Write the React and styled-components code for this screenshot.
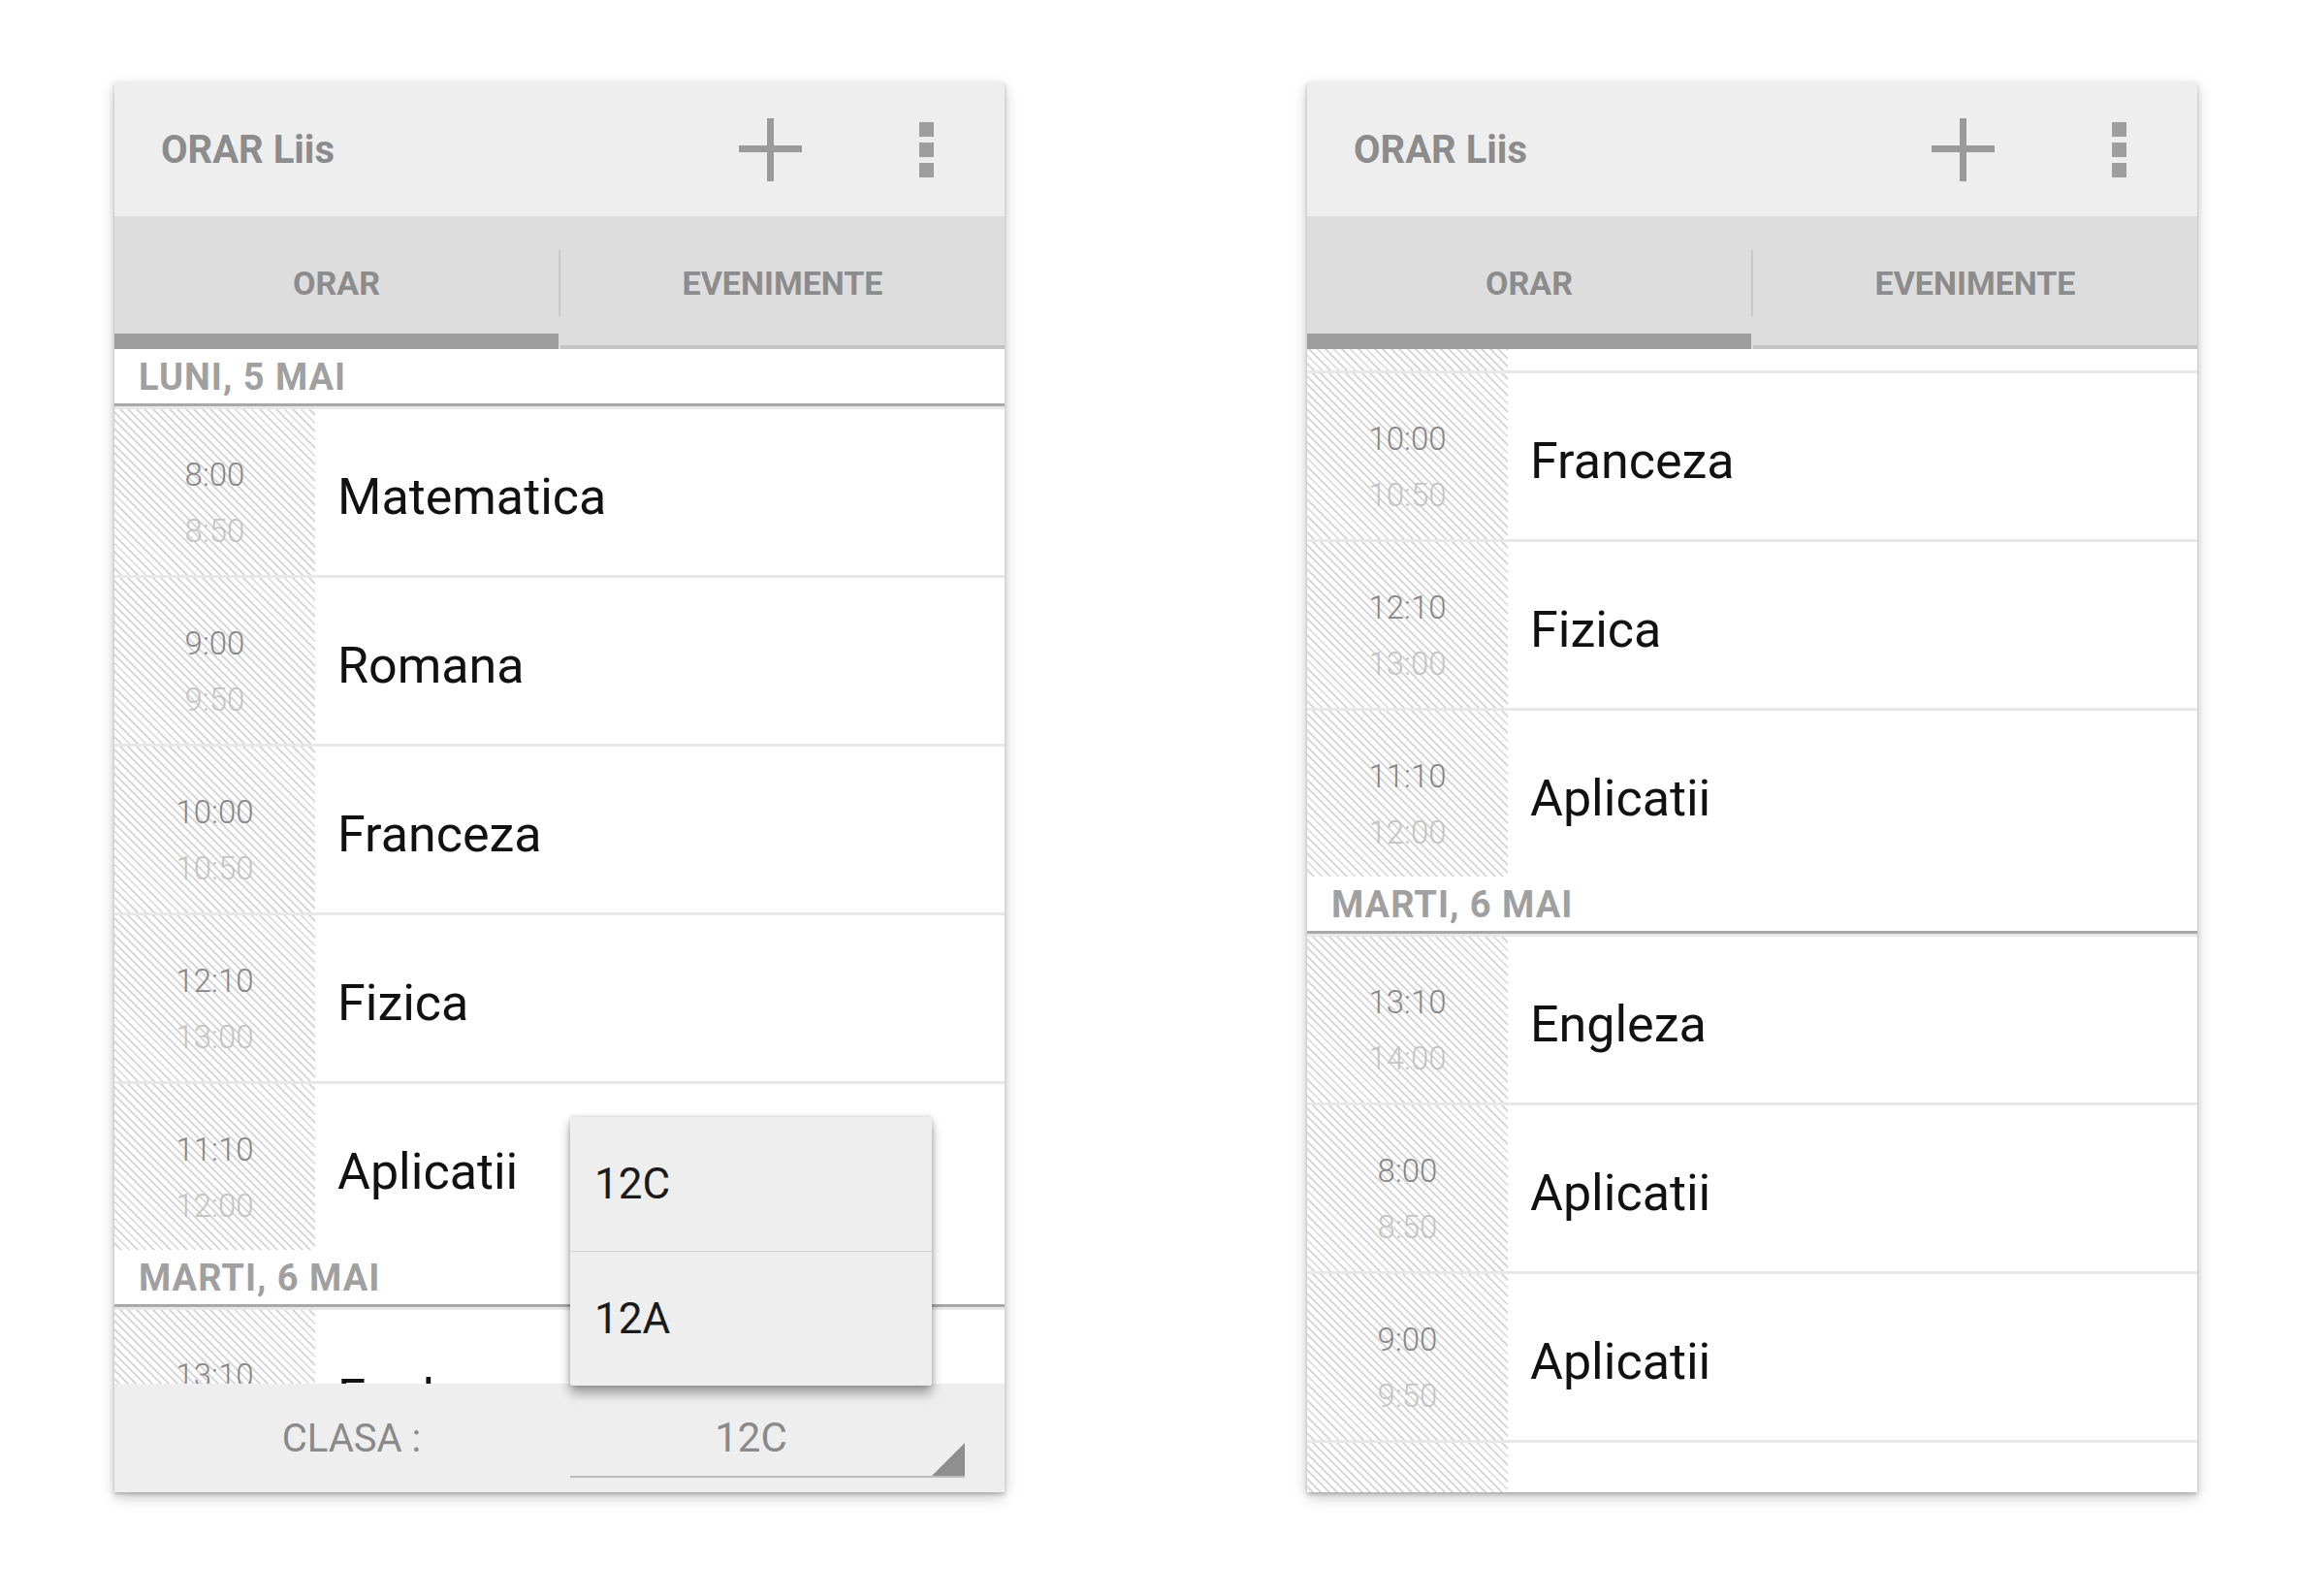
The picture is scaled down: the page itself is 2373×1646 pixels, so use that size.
import React, { useLayoutEffect, useRef } from 'react';
import styled, { createGlobalStyle } from 'styled-components';

const GlobalStyle = createGlobalStyle`
	html, body {
		margin: 0;
		padding: 0;
		background: #ffffff;
	}

	body {
		font-family: Roboto, "Noto Sans", "Liberation Sans", sans-serif;
	}
`;

const schedule = [
	{
		day: 'LUNI, 5 MAI',
		lessons: [
			{ start: '8:00', end: '8:50', name: 'Matematica' },
			{ start: '9:00', end: '9:50', name: 'Romana' },
			{ start: '10:00', end: '10:50', name: 'Franceza' },
			{ start: '12:10', end: '13:00', name: 'Fizica' },
			{ start: '11:10', end: '12:00', name: 'Aplicatii' },
		],
	},
	{
		day: 'MARTI, 6 MAI',
		lessons: [
			{ start: '13:10', end: '14:00', name: 'Engleza' },
			{ start: '8:00', end: '8:50', name: 'Aplicatii' },
			{ start: '9:00', end: '9:50', name: 'Aplicatii' },
			{ start: '10:00', end: '10:50', name: 'Aplicatii' },
		],
	},
];

const classes = ['12C', '12A'];

const PlusIcon = () => (
	<svg width="65" height="65" viewBox="0 0 65 65" fill="#9a9a9a">
		<rect x="0" y="28" width="65" height="7" />
		<rect x="29" y="0" width="7" height="65" />
	</svg>
);

const OverflowIcon = () => (
	<svg width="15" height="57" viewBox="0 0 15 57" fill="#9e9e9e">
		<rect x="0" y="0" width="15" height="15" />
		<rect x="0" y="21" width="15" height="15" />
		<rect x="0" y="42" width="15" height="15" />
	</svg>
);

const Caret = () => (
	<svg width="34" height="34" viewBox="0 0 34 34">
		<polygon points="34,0 34,34 0,34" fill="#8f8f8f" />
	</svg>
);

// the list is a scroll view; the second screen shows it scrolled down
const Timetable = ({ scrollOffset = 0 }) => {
	const listRef = useRef(null);

	useLayoutEffect(() => {
		if (listRef.current) listRef.current.scrollTop = scrollOffset;
	}, [scrollOffset]);

	return (
		<List ref={listRef}>
			{schedule.map((group) => (
				<React.Fragment key={group.day}>
					<DayHeader>{group.day}</DayHeader>
					{group.lessons.map((lesson, i) => (
						<Row key={group.day + i}>
							<TimeCol>
								<Time>{lesson.start}</Time>
								<Time $muted>{lesson.end}</Time>
							</TimeCol>
							<Subject>{lesson.name}</Subject>
						</Row>
					))}
				</React.Fragment>
			))}
		</List>
	);
};

const Header = () => (
	<>
		<ActionBar>
			<Title>ORAR Liis</Title>
			<Actions>
				<IconButton>
					<PlusIcon />
				</IconButton>
				<IconButton>
					<OverflowIcon />
				</IconButton>
			</Actions>
		</ActionBar>
		<TabBar>
			<Tab $active>ORAR</Tab>
			<TabDivider />
			<Tab>EVENIMENTE</Tab>
		</TabBar>
	</>
);

const App = () => (
	<>
		<GlobalStyle />
		<Page>
			<Phone>
				<Header />
				<Timetable />
				<BottomBar>
					<ClassLabel>CLASA :</ClassLabel>
					<Spinner>
						<SpinnerValue>12C</SpinnerValue>
						<Caret />
						<Popup>
							{classes.map((c) => (
								<PopupItem key={c}>{c}</PopupItem>
							))}
						</Popup>
					</Spinner>
				</BottomBar>
			</Phone>

			<Phone>
				<Header />
				<Timetable scrollOffset={385} />
			</Phone>
		</Page>
	</>
);

const Page = styled.div`
	display: flex;
	align-items: flex-start;
	gap: 312px;
	padding: 85px 0 0 118px;
	min-height: 1646px;
	box-sizing: border-box;
`;

const Phone = styled.div`
	position: relative;
	width: 918px;
	height: 1454px;
	display: flex;
	flex-direction: column;
	background: #ffffff;
	box-shadow: 0 2px 4px rgba(0, 0, 0, 0.22), 0 5px 14px rgba(0, 0, 0, 0.22);
`;

const ActionBar = styled.div`
	flex: 0 0 138px;
	display: flex;
	align-items: center;
	padding: 0 33px 0 48px;
	background: #eeeeee;
`;

const Title = styled.h1`
	margin: 0;
	font-size: 40px;
	font-weight: 700;
	color: #8c8c8c;
`;

const Actions = styled.div`
	margin-left: auto;
	display: flex;
	align-items: center;
	gap: 65px;
`;

const IconButton = styled.div`
	width: 96px;
	height: 96px;
	display: flex;
	align-items: center;
	justify-content: center;
`;

const TabBar = styled.div`
	flex: 0 0 137px;
	display: flex;
	align-items: center;
	background: #dddddd;
`;

const Tab = styled.div`
	flex: 1;
	align-self: stretch;
	display: flex;
	align-items: center;
	justify-content: center;
	font-size: 34px;
	font-weight: 700;
	color: #8c8c8c;
	box-shadow: ${({ $active }) =>
		$active ? 'inset 0 -16px 0 #9e9e9e' : 'inset 0 -4px 0 #c4c4c4'};
`;

const TabDivider = styled.div`
	width: 2px;
	height: 68px;
	background: #c8c8c8;
`;

const List = styled.div`
	flex: 1;
	min-height: 0;
	overflow: hidden;
	background: #ffffff;
`;

const DayHeader = styled.div`
	height: 59px;
	box-sizing: border-box;
	display: flex;
	align-items: center;
	padding: 2px 0 0 25px;
	border-bottom: 3px solid #a8a8a8;
	font-size: 38px;
	font-weight: 700;
	letter-spacing: 1px;
	color: #a0a0a0;
`;

const Row = styled.div`
	height: 174px;
	box-sizing: border-box;
	display: flex;
	border-top: 3px solid #e8e8e8;
`;

const TimeCol = styled.div`
	flex: 0 0 207px;
	display: flex;
	flex-direction: column;
	align-items: center;
	justify-content: center;
	padding-top: 23px;
	box-sizing: border-box;
	background: repeating-linear-gradient(
		45deg,
		#ffffff 0px,
		#ffffff 4px,
		#d9d9d9 4px,
		#d9d9d9 6px
	);
`;

const Time = styled.span`
	font-size: 33px;
	font-weight: 300;
	line-height: 58px;
	color: ${({ $muted }) => ($muted ? '#c4c4c4' : '#868686')};
`;

const Subject = styled.div`
	flex: 1;
	display: flex;
	align-items: center;
	padding: 9px 0 0 23px;
	font-size: 52px;
	color: #111111;
`;

const BottomBar = styled.div`
	flex: 0 0 112px;
	display: flex;
	align-items: stretch;
	padding-bottom: 15px;
	box-sizing: border-box;
	background: #eeeeee;
`;

const ClassLabel = styled.div`
	flex: 0 0 470px;
	box-sizing: border-box;
	display: flex;
	align-items: center;
	justify-content: center;
	padding: 15px 0 0 19px;
	font-size: 40px;
	color: #8a8a8a;
`;

const Spinner = styled.div`
	position: relative;
	flex: 0 0 407px;
	display: flex;
	align-items: flex-end;
	padding-top: 16px;
	box-sizing: border-box;
	border-bottom: 2px solid #bdbdbd;
`;

const SpinnerValue = styled.div`
	flex: 1;
	align-self: center;
	text-align: center;
	font-size: 42px;
	color: #8a8a8a;
`;

const Popup = styled.div`
	position: absolute;
	left: 0;
	bottom: calc(100% - 2px);
	width: 373px;
	background: #eeeeee;
	border-radius: 2px;
	box-shadow: 0 8px 12px rgba(0, 0, 0, 0.35), 0 0 5px rgba(0, 0, 0, 0.2);
`;

const PopupItem = styled.div`
	height: 138px;
	display: flex;
	align-items: center;
	padding-left: 25px;
	font-size: 44px;
	color: #1a1a1a;

	& + & {
		border-top: 1px solid #d2d2d2;
	}
`;

export default App;
